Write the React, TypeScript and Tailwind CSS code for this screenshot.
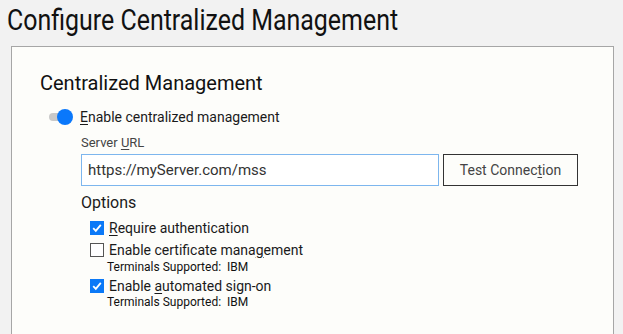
import React from "react";

const Check = ({ checked }: { checked: boolean }) =>
  checked ? (
    <span className="flex h-[14px] w-[14px] items-center justify-center bg-[#0b79f7]">
      <svg width="12" height="12" viewBox="0 0 12 12">
        <path d="M2.2 6.2 L4.8 8.8 L9.8 2.8" fill="none" stroke="white" strokeWidth="1.8" />
      </svg>
    </span>
  ) : (
    <span className="block h-[14px] w-[14px] border border-[#555] bg-white" />
  );

export default function App() {
  return (
    <div
      className="h-[334px] w-[623px] overflow-hidden bg-[#f2f2f2] text-[#1a1a1a]"
      style={{ fontFamily: "Roboto, 'Liberation Sans', sans-serif" }}
    >
      <div className="h-[39px] pl-[7px] pt-[1px]">
        <h1 className="inline-block origin-left scale-x-[0.86] whitespace-nowrap text-[29px] leading-[38px] text-[#111]">
          Configure Centralized Management
        </h1>
      </div>
      <div className="ml-[11px] mt-[7px] h-[300px] w-[603px] border border-b-0 border-[#a6a6a6] bg-[#fdfdfa] pl-[28px] pt-[22px]">
        <div className="text-[20px] leading-[28px] text-[#111]">Centralized Management</div>
        <div className="mt-[11px] flex items-center">
          <span className="relative ml-[9px] block h-[8px] w-[16px] rounded-full bg-[#c9c9c9]">
            <span className="absolute left-[8px] top-[-4px] block h-[16px] w-[16px] rounded-full bg-[#0a78fb]" />
          </span>
          <span className="ml-[15px] text-[14px] leading-[18px] text-[#1a1a1a]">
            <u className="underline-offset-2">E</u>nable centralized management
          </span>
        </div>
        <div className="ml-[41px] mt-[9px] text-[13px] leading-[16px] text-[#444]">
          Server <u className="underline-offset-2">U</u>RL
        </div>
        <div className="ml-[41px] mt-[3px] flex gap-[4px]">
          <div className="flex h-[32px] w-[358px] items-center border border-[#7db6ee] bg-white pl-[6px] text-[15px] text-[#333]">
            https://myServer.com/mss
          </div>
          <div className="flex h-[32px] w-[135px] items-center justify-center border-[1.5px] border-[#333] bg-[#fdfdfa] text-[14px] text-[#444]">
            Test Connec<u className="underline-offset-2">t</u>ion
          </div>
        </div>
        <div className="ml-[41px] mt-[6px] text-[16px] leading-[22px] text-[#1a1a1a]">Options</div>
        <div className="ml-[50px] mt-[3px] flex flex-col">
          <div className="flex h-[22px] items-center gap-[5px]">
            <Check checked />
            <span className="text-[14px] text-[#1a1a1a]">
              <u className="underline-offset-2">R</u>equire authentication
            </span>
          </div>
          <div className="flex h-[22px] items-center gap-[5px]">
            <Check checked={false} />
            <span className="text-[14px] text-[#1a1a1a]">
              Enable certificate mana<u className="underline-offset-2">g</u>ement
            </span>
          </div>
          <div className="-mt-[1px] ml-[17px] h-[14px] text-[12px] leading-[14px] text-[#111]">Terminals Supported:&nbsp; IBM</div>
          <div className="mt-[1px] flex h-[22px] items-center gap-[5px]">
            <Check checked />
            <span className="text-[14px] text-[#1a1a1a]">
              Enable <u className="underline-offset-2">a</u>utomated sign-on
            </span>
          </div>
          <div className="-mt-[2px] ml-[17px] h-[14px] text-[12px] leading-[14px] text-[#111]">Terminals Supported:&nbsp; IBM</div>
        </div>
      </div>
    </div>
  );
}
